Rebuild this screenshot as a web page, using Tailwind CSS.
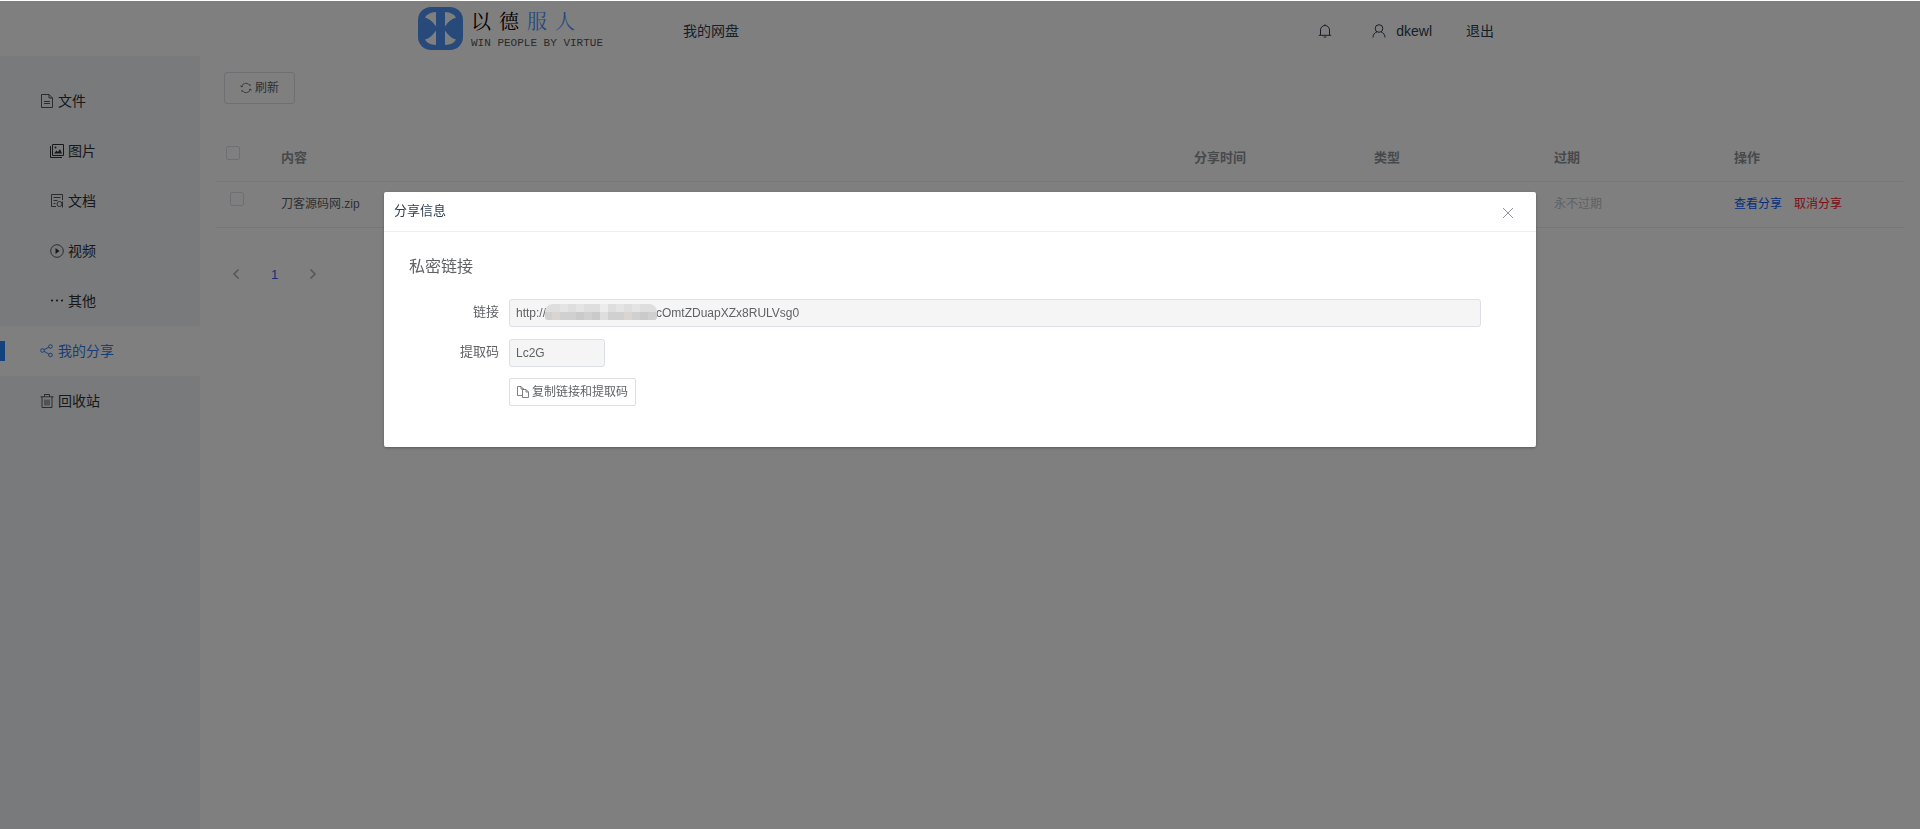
<!DOCTYPE html>
<html lang="zh-CN">
<head>
    <meta charset="UTF-8">
    <meta name="viewport" content="width=device-width, initial-scale=1.0">
    <title>我的分享</title>
    <script src="https://cdn.jsdelivr.net/npm/@tailwindcss/browser@4"></script>
</head>
<body class="min-h-screen bg-white pt-px font-['Liberation_Sans','Noto_Sans_CJK_SC',sans-serif] text-sm text-[#303133]">

    <div class="flex min-h-[calc(100vh-1px)] flex-col">
        <!-- Top bar -->
        <header class="h-[55px] text-[#2c3e50]">
            <div class="mx-auto flex h-full w-full max-w-[1084px] items-center pt-1 pr-2">
                <a href="#" class="-mt-1 flex items-center gap-2" aria-label="以德服人">
                    <svg class="h-[43px] w-[45px]" viewBox="0 0 45 43" fill="none">
                        <rect width="45" height="43" rx="13" fill="#4f94f5"/>
                        <path d="M18 5v14.500Q13 12 7 10.500Q9.500 5.500 18 5ZM27 5v14.500Q32 12 38 10.500Q35.500 5.500 27 5ZM18 38V23.500Q13 31 7 32.500Q9.500 37.500 18 38ZM27 38V23.500Q32 31 38 32.500Q35.500 37.500 27 38Z" fill="#fff"/>
                    </svg>
                    <span class="flex flex-col">
                        <span class="flex gap-2 font-['Noto_Serif_CJK_SC','Noto_Sans_CJK_SC',serif] text-xl leading-7 text-black"><span>以</span><span>德</span><span class="text-[#4f94f5]">服</span><span class="text-[#4f94f5]">人</span></span>
                        <span class="font-['Liberation_Mono',monospace] text-[11px] leading-4 text-[#555]">WIN PEOPLE BY VIRTUE</span>
                    </span>
                </a>
                <nav class="ml-20"><a href="#">我的网盘</a></nav>
                <div class="ml-auto flex items-center">
                    <button type="button" class="mr-10" aria-label="通知">
                        <svg class="size-3.5" viewBox="0 0 14 14" fill="none" stroke="currentColor"><path d="M.8 11.300h12.400M2.500 11V6a4.500 4.500 0 0 1 9 0v5M7 1.500V.3M5.700 13h2.600"/></svg>
                    </button>
                    <a href="#" class="mr-[34px] flex items-center gap-2.5">
                        <svg class="size-3.5" viewBox="0 0 14 14" fill="none" stroke="currentColor"><circle cx="7" cy="4.500" r="3.800"/><path d="M1 13.500c0-3 1.800-5 4-5.600M13 13.500c0-3-1.800-5-4-5.600"/></svg>
                        dkewl
                    </a>
                    <a href="#">退出</a>
                </div>
            </div>
        </header>

        <div class="flex flex-1">
            <!-- Sidebar -->
            <aside class="w-[200px] shrink-0 bg-[#f2f4f8] pt-5">
                <ul class="leading-[50px]">
                    <li><a href="#" class="flex items-center gap-1 pl-10">
                        <svg class="size-3.5" viewBox="0 0 14 14" fill="none" stroke="currentColor" stroke-width=".8"><path d="M1.500.5h7.500l3.500 3.500v9.500h-11zM9 .5V4h3.500M4 7.500h6M4 9.500h6"/></svg>文件</a></li>
                    <li><a href="#" class="flex items-center gap-1 pl-[50px]">
                        <svg class="size-3.5" viewBox="0 0 14 14" fill="none" stroke="currentColor"><path d="M2.500.5h11v11h-11zM.5 2v11.500H12"/><path d="M4 9.500l2.500-3 1.500 1.500 2-3 2 4.500z" fill="currentColor" stroke="none"/><circle cx="5.500" cy="3.500" r="1" fill="currentColor" stroke="none"/></svg>图片</a></li>
                    <li><a href="#" class="flex items-center gap-1 pl-[50px]">
                        <svg class="size-3.5" viewBox="0 0 14 14" fill="none" stroke="currentColor" stroke-width=".8"><path d="M6 12.500H1.500V.5h11V6M3.500 3.500h7M3.500 6.500h4M3.500 9.500h2M12.500 7.500v6"/><circle cx="9.500" cy="10" r="2.500"/></svg>文档</a></li>
                    <li><a href="#" class="flex items-center gap-1 pl-[50px]">
                        <svg class="size-3.5" viewBox="0 0 14 14" fill="none" stroke="currentColor" stroke-width=".8"><circle cx="7" cy="7" r="6.300"/><path d="M5.500 4v6L9.500 7z" fill="currentColor" stroke="none"/></svg>视频</a></li>
                    <li><a href="#" class="flex items-center gap-1 pl-[50px]">
                        <svg class="size-3.5" viewBox="0 0 14 14" fill="currentColor"><circle cx="2" cy="6.500" r="1.100"/><circle cx="7" cy="6.500" r="1.100"/><circle cx="12" cy="6.500" r="1.100"/></svg>其他</a></li>
                    <li class="flex items-center bg-white"><span class="h-5 w-[5px] bg-[#2486fb]"></span><a href="#" class="flex flex-1 items-center gap-1 pl-[35px] text-[#2d7cf0]">
                        <svg class="size-3.5" viewBox="0 0 14 14" fill="none" stroke="currentColor"><circle cx="2.500" cy="6.500" r="1.800"/><circle cx="10.500" cy="2.500" r="1.800"/><circle cx="10.500" cy="11" r="1.800"/><path d="M4.200 5.600l4.600-2.300M4.200 7.400L9 10.200"/></svg>我的分享</a></li>
                    <li><a href="#" class="flex items-center gap-1 pl-10">
                        <svg class="size-3.5" viewBox="0 0 14 14" fill="none" stroke="currentColor" stroke-width=".8"><path d="M.5 2.800h13M4.500 2.500v-2h5v2M2 3v10.500h10V3M5 5.500v6M7 5.500v6M9 5.500v6"/></svg>回收站</a></li>
                </ul>
            </aside>

            <!-- Share list -->
            <main class="min-w-0 flex-1 p-4 text-xs text-[#606266]">
                <button type="button" class="ml-2 flex h-8 items-center gap-[3px] rounded-[3px] border border-[#dcdfe6] px-[15px]">
                    <svg class="size-3" viewBox="0 0 12 12" fill="none" stroke="currentColor" stroke-width=".8"><path d="M1.500 5a4.500 4.500 0 0 1 8.500-1.200V2M10.500 7A4.500 4.500 0 0 1 2 8.200V10M.5 3.500l1 1.500 1.500-.8M11.500 8.500l-1-1.500-1.500.8"/></svg>刷新
                </button>

                <table class="mt-[30px] w-full table-fixed border-collapse text-left">
                    <thead class="text-[13px] text-[#909399]">
                        <tr class="h-[47px] border-b border-[#ebeef5]">
                            <th class="w-[55px] pb-2 pl-2.5 align-middle"><input type="checkbox" aria-label="全选" class="block size-3.5 appearance-none rounded-[2px] border border-[#dcdfe6] bg-white"></th>
                            <th class="pl-2.5">内容</th>
                            <th class="w-[180px] pl-2.5">分享时间</th>
                            <th class="w-[180px] pl-2.5">类型</th>
                            <th class="w-[180px] pl-2.5">过期</th>
                            <th class="w-[180px] pl-2.5">操作</th>
                        </tr>
                    </thead>
                    <tbody>
                        <tr class="h-[46px] border-b border-[#ebeef5]">
                            <td class="pb-2.5 pl-3.5"><input type="checkbox" aria-label="选择 刀客源码网.zip" class="block size-3.5 appearance-none rounded-[2px] border border-[#dcdfe6] bg-white"></td>
                            <td class="pl-2.5">刀客源码网.zip</td>
                            <td></td>
                            <td></td>
                            <td class="pl-2.5 text-[#c0c4cc]">永不过期</td>
                            <td class="pl-2.5"><a href="#" class="mr-3 text-[#0a5cf5]">查看分享</a><a href="#" class="text-[#f5222d]">取消分享</a></td>
                        </tr>
                    </tbody>
                </table>

                <nav class="mt-[38px] flex items-center gap-[30px] pl-[15px] text-[13px]" aria-label="分页">
                    <button type="button" class="text-[#a8abb2]" aria-label="上一页"><svg class="h-3 w-2.5" viewBox="0 0 10 12" fill="none" stroke="currentColor" stroke-width="1.500"><path d="M7.500 1.500L3 6l4.500 4.500"/></svg></button>
                    <a href="#" class="text-[#2d5cf0]">1</a>
                    <button type="button" class="text-[#a8abb2]" aria-label="下一页"><svg class="h-3 w-2.5" viewBox="0 0 10 12" fill="none" stroke="currentColor" stroke-width="1.500"><path d="M2.500 1.500L7 6l-4.500 4.500"/></svg></button>
                </nav>
            </main>
        </div>
    </div>

    <!-- Share dialog -->
    <div class="fixed inset-x-0 top-px bottom-0 bg-black/50 pt-[191px]">
        <div role="dialog" aria-labelledby="dialog-title" class="mx-auto w-3/5 rounded-[2px] bg-white shadow-[0_1px_3px_rgba(0,0,0,0.3)]">
            <div class="flex h-10 items-center justify-between border-b border-[#eee] pr-[22px] pl-2.5">
                <h2 id="dialog-title" class="text-[13px] text-[#2c3e50]">分享信息</h2>
                <button type="button" class="mt-0.5 text-[#909399]" aria-label="关闭">
                    <svg class="size-3" viewBox="0 0 12 12" fill="none" stroke="currentColor"><path d="M1 1l10 10M11 1L1 11"/></svg>
                </button>
            </div>
            <form class="px-[25px] pt-[23px] pb-[41px] text-[13px] text-[#606266]">
                <h3 class="mb-5 text-base">私密链接</h3>
                <div class="mb-3 flex items-center pr-[30px]">
                    <label for="link" class="w-[100px] shrink-0 pr-2.5 pb-0.5 text-right">链接</label>
                    <div class="relative flex-1">
                        <input id="link" readonly class="block h-7 w-full rounded-[3px] border border-[#dcdfe6] bg-[#f5f5f5] px-1.5 text-xs" value="http://&nbsp;&nbsp;&nbsp;&nbsp;&nbsp;&nbsp;&nbsp;&nbsp;&nbsp;&nbsp;&nbsp;&nbsp;&nbsp;&nbsp;&nbsp;&nbsp;&nbsp;&nbsp;&nbsp;&nbsp;&nbsp;&nbsp;&nbsp;&nbsp;&nbsp;&nbsp;&nbsp;&nbsp;&nbsp;&nbsp;&nbsp;&nbsp;&nbsp;cOmtZDuapXZx8RULVsg0">
                        <svg class="absolute top-[5px] left-9 h-4 w-[112px] rounded-t-lg rounded-b-[3px]" viewBox="0 0 112 16" shape-rendering="crispEdges" aria-hidden="true">
                            <path fill="#dedede" d="M0 0h112v16H0z"/>
                            <path fill="#e4e4e5" d="M15 0h8v8h-8zM31 0h8v8h-8zM71 0h8v8h-8zM87 0h8v8h-8z"/>
                            <path fill="#d0d0d1" d="M0 8h55v8H0zM63 8h49v8H63z"/>
                            <path fill="#d8d5d2" d="M7 8h8v8H7zM79 8h8v8h-8z"/>
                            <path fill="#cacacc" d="M31 8h8v8h-8zM47 8h8v8h-8zM95 8h8v8h-8z"/>
                            <path fill="#ebecec" d="M55 0h8v8h-8z"/>
                        </svg>
                    </div>
                </div>
                <div class="mb-[11px] flex items-center">
                    <label for="code" class="w-[100px] shrink-0 pr-2.5 pb-0.5 text-right">提取码</label>
                    <input id="code" readonly value="Lc2G" class="h-7 w-24 rounded-[3px] border border-[#dcdfe6] bg-[#f5f5f5] px-1.5 text-xs">
                </div>
                <button type="button" class="ml-[100px] flex h-7 items-center gap-[3px] rounded-[2px] border border-[#dcdfe6] px-[7px] text-xs">
                    <svg class="size-3" viewBox="0 0 12 12" fill="none" stroke="currentColor" stroke-width=".8"><path d="M5 9.500H.5v-9H4L6.500 3v1M4 .5V3h2.500M5.500 3.500H9L11.500 6v5.500h-6zM9 3.500V6h2.500"/></svg>复制链接和提取码
                </button>
            </form>
        </div>
    </div>
</body>
</html>
